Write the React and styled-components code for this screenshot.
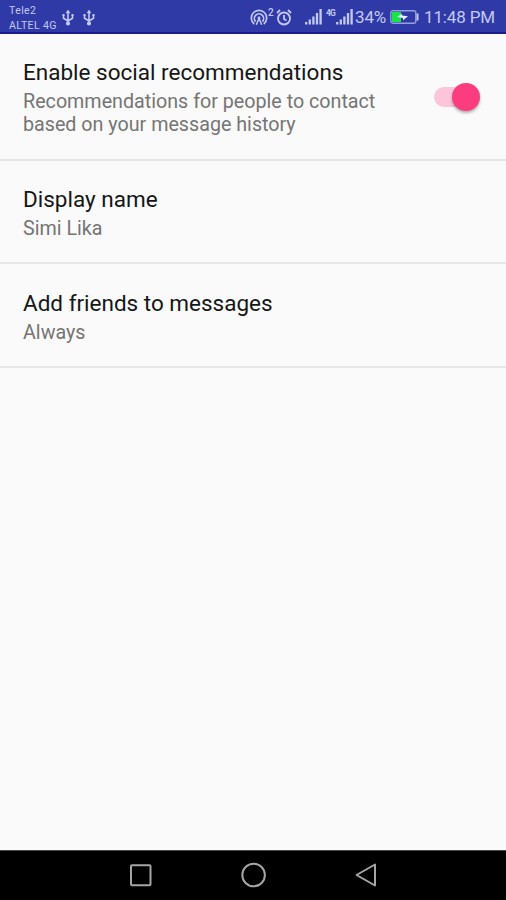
import React from "react";
import styled, { createGlobalStyle } from "styled-components";

const GlobalStyle = createGlobalStyle`
  * { box-sizing: border-box; }
  body { margin: 0; background: #fafafa; font-family: Roboto, sans-serif; }
`;

const Screen = styled.div`
  display: flex;
  flex-direction: column;
  width: 506px;
  height: 900px;
  overflow: hidden;
  background: #fafafa;
`;

const StatusBar = styled.header`
  display: flex;
  flex: none;
  justify-content: space-between;
  height: 34px;
  padding: 0 10px 0 9px;
  background: #303aa6;
  border-bottom: 2px solid #1a1b91;
  color: #c3c9f3;
`;

const StatusGroup = styled.div`
  display: flex;
  align-items: flex-start;
`;

const Carriers = styled.div`
  width: 52px;
  padding-top: 3px;
  font-size: 10.5px;
  line-height: 15px;
  letter-spacing: 0.4px;
  white-space: nowrap;
`;

const StatusText = styled.span`
  width: ${(p) => p.$width}px;
  margin-left: ${(p) => p.$gap}px;
  padding-top: 7px;
  font-size: 17px;
  line-height: 21px;
  letter-spacing: -0.15px;
  white-space: nowrap;
`;

const Glyph = styled.svg`
  display: block;
  flex: none;
  margin-left: ${(p) => p.$gap || 0}px;
  margin-top: ${(p) => p.$top}px;
  fill: none;
  stroke: currentColor;
  overflow: visible;
`;

const NetworkLabel = styled.sup`
  width: 10px;
  margin: 9px 0 0 4px;
  font-size: 8.5px;
  font-weight: 700;
  line-height: 9px;
  letter-spacing: -0.9px;
`;

const HotspotCount = styled(NetworkLabel)`
  width: 7px;
  margin: 8px 0 0 0;
  font-size: 10px;
  font-weight: 500;
`;

const Settings = styled.main`
  flex: 1;
`;

const Row = styled.section`
  display: flex;
  justify-content: space-between;
  height: ${(p) => p.$height}px;
  padding: ${(p) => p.$top}px 26px 0 23px;
  border-bottom: 2px solid #e6e6e6;
`;

const Title = styled.h2`
  margin: 0;
  color: #161616;
  font-size: 22.5px;
  font-weight: 400;
  line-height: 27px;
  white-space: nowrap;
`;

const Summary = styled.p`
  margin: 4px 0 0;
  color: #757575;
  font-size: 19.7px;
  line-height: 23px;
  white-space: nowrap;
`;

const Switch = styled.button`
  display: flex;
  align-items: center;
  justify-content: flex-end;
  width: 46px;
  height: 20px;
  margin: 28px 0 0;
  padding: 0;
  border: 0;
  border-radius: 10px;
  background: linear-gradient(#fec4d9, #fec4d9) 0 0 / 36px 20px no-repeat;
`;

const Thumb = styled.span`
  width: 28px;
  height: 28px;
  flex: none;
  border-radius: 50%;
  background: #fb3d7f;
  box-shadow: 0 2px 3px rgba(0, 0, 0, 0.3);
`;

const Navigation = styled.nav`
  display: flex;
  flex: none;
  align-items: center;
  justify-content: center;
  gap: 88px;
  height: 50px;
  padding-left: 2px;
  border-top: 1px solid #4a4a4a;
  background: #000;
  color: #a5a5a5;
`;

const NavButton = styled.button`
  display: flex;
  padding: 0;
  border: 0;
  background: none;
  color: inherit;
`;

function Usb({ gap }) {
  return (
    <Glyph $gap={gap} $top={9} width="14" height="17" viewBox="0 0 14 17" strokeWidth="1.6">
      <path d="M7 2v13M2.5 6v3.3L7 12M11.5 6v3.3L7 12" />
      <path d="M5 4l2-3 2 3z" fill="currentColor" strokeWidth=".5" />
      <circle cx="7" cy="14.5" r="1.3" fill="currentColor" />
      <path d="M1.5 5h2v2h-2zM10.5 5h2v2h-2z" fill="currentColor" stroke="none" />
    </Glyph>
  );
}

function Signal({ gap }) {
  return (
    <Glyph $gap={gap} $top={9} width="17" height="16" viewBox="0 0 17 16" strokeWidth="2.3">
      <path d="M1.2 15.5v-2.5M4.8 15.5v-5M8.4 15.5V7.5M12 15.5V4M15.6 15.5V0" />
    </Glyph>
  );
}

export default function App() {
  return (
    <>
      <GlobalStyle />
      <Screen>
        <StatusBar>
          <StatusGroup>
            <Carriers>
              <div>Tele2</div>
              <div>ALTEL 4G</div>
            </Carriers>
            <Usb />
            <Usb gap={7} />
          </StatusGroup>
          <StatusGroup>
            <Glyph $top={9} width="18" height="17" viewBox="0 0 18 17" strokeWidth="1.7">
              <path d="M4.2 15A7.7 7.7 0 1 1 13.8 15M5.6 12.6A4.6 4.6 0 1 1 12.4 12.6" />
              <path d="M6.3 15.8L9 9.5l2.7 6.3" strokeWidth="1.5" />
              <circle cx="9" cy="9" r="1.4" fill="currentColor" stroke="none" />
            </Glyph>
            <HotspotCount>2</HotspotCount>
            <Glyph $top={9} $gap={1} width="16" height="17" viewBox="0 0 16 17" strokeWidth="1.8">
              <circle cx="8" cy="9.5" r="6" />
              <path d="M8 6v4l2.5 1.5M1 4l3-3M12 1l3 3" />
            </Glyph>
            <Signal gap={13} />
            <NetworkLabel>4G</NetworkLabel>
            <Signal gap={0} />
            <StatusText $width={31} $gap={2}>34%</StatusText>
            <Glyph $top={10} $gap={4} width="29" height="14" viewBox="0 0 29 14" strokeWidth="1.4">
              <rect x=".8" y=".8" width="25" height="12.4" rx="2" stroke="#949fe0" />
              <path d="M2 2h9v10H2z" fill="#17e34b" stroke="none" />
              <path d="M7 7l5-3.3v1.8l6 .8-5 4v-2.3z" fill="#e5f2fb" stroke="none" />
              <path d="M27.5 3.5v7" strokeWidth="2" />
            </Glyph>
            <StatusText $width={72} $gap={5}>11:48 PM</StatusText>
          </StatusGroup>
        </StatusBar>
        <Settings>
          <Row $height={127} $top={25}>
            <div>
              <Title>Enable social recommendations</Title>
              <Summary>
                Recommendations for people to contact
                <br />
                based on your message history
              </Summary>
            </div>
            <Switch role="switch" aria-checked="true" aria-label="Enable social recommendations">
              <Thumb />
            </Switch>
          </Row>
          <Row $height={103} $top={25}>
            <div>
              <Title>Display name</Title>
              <Summary>Simi Lika</Summary>
            </div>
          </Row>
          <Row $height={104} $top={26}>
            <div>
              <Title>Add friends to messages</Title>
              <Summary>Always</Summary>
            </div>
          </Row>
        </Settings>
        <Navigation>
          <NavButton aria-label="Recent apps">
            <Glyph $top={-1} width="24" height="26" viewBox="0 0 24 26" strokeWidth="2">
              <rect x="2" y="3.2" width="19.5" height="20" rx="1" />
            </Glyph>
          </NavButton>
          <NavButton aria-label="Home">
            <Glyph $top={-1} width="26" height="26" viewBox="0 0 26 26" strokeWidth="2">
              <circle cx="12.6" cy="13" r="11.3" />
            </Glyph>
          </NavButton>
          <NavButton aria-label="Back">
            <Glyph $top={-1} width="24" height="26" viewBox="0 0 24 26" strokeWidth="2" strokeLinejoin="round">
              <path d="M20 2.5v21L1.5 13z" />
            </Glyph>
          </NavButton>
        </Navigation>
      </Screen>
    </>
  );
}
